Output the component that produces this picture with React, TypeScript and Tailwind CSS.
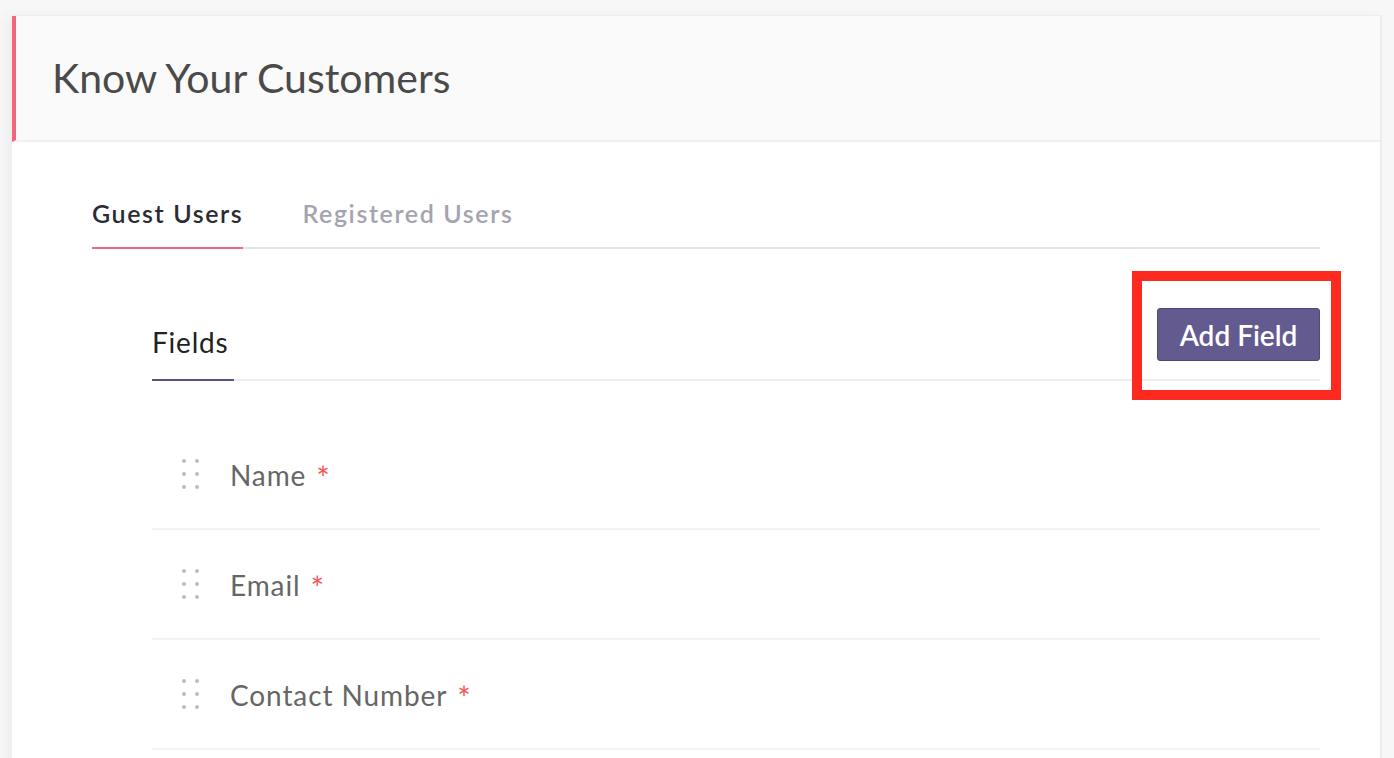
import React from "react";

function DragDots() {
  return (
    <div className="grid grid-cols-2 gap-x-[9px] gap-y-[9px] w-[17px]">
      {Array.from({ length: 6 }).map((_, i) => (
        <span key={i} className="block w-[4px] h-[4px] rounded-full bg-[#bdbdbd]" />
      ))}
    </div>
  );
}

function FieldRow({ label }: { label: string }) {
  return (
    <div className="h-[110px] border-b-2 border-[#f3f3f3] flex items-center pl-[30px]">
      <DragDots />
      <div className="ml-[31px] flex items-baseline text-[28px] leading-[34px] text-[#666666] tracking-[0.9px]">
        <span>{label}</span>
        <span className="ml-[10px] text-[#f25858] text-[32px] leading-[34px] relative top-[4px]">*</span>
      </div>
    </div>
  );
}

export default function App() {
  return (
    <div
      className="min-h-screen w-full bg-[#f7f7f7] pt-[15px] overflow-hidden"
      style={{ fontFamily: "Lato, 'Open Sans', sans-serif" }}
    >
      <div className="ml-[12px] w-[1370px] min-h-[760px] bg-white border-t border-[#ededed] border-r-2 border-r-[#ececec] shadow-[-6px_0_10px_rgba(0,0,0,0.035)]">
        <div className="h-[126px] bg-[#fafafa] border-l-4 border-[#f0667a] border-b-2 border-b-[#f0f0f0] flex items-center pl-[36px]">
          <h1 className="text-[41px] leading-[48px] text-[#4a4a4a] font-normal">
            Know Your Customers
          </h1>
        </div>

        <div className="pl-[80px] pr-[60px]">
          <div className="mt-[56px] flex gap-[59px] border-b-2 border-[#e3e3ea]">
            <div className="text-[25px] leading-[30px] font-semibold tracking-[1.6px] text-[#2b2b33] pb-[19px] border-b-2 border-[#f0667a] -mb-[2px]">
              Guest Users
            </div>
            <div className="text-[25px] leading-[30px] font-semibold tracking-[1.6px] text-[#a4a4ae] pb-[19px]">
              Registered Users
            </div>
          </div>

          <div className="pl-[60px]">
            <div className="relative mt-[59px] flex items-end justify-between border-b-2 border-[#eeeeee]">
              <div className="text-[28px] leading-[34px] tracking-[0.8px] text-[#222222] pb-[20px] border-b-2 border-[#5b5188] -mb-[2px] w-[82px]">
                Fields
              </div>
              <button className="mb-[18px] h-[53px] w-[163px] rounded-[3px] bg-[#635b8f] border border-[#4f4878] text-white text-[28px] font-semibold leading-none">
                Add Field
              </button>
              <div className="absolute -right-[21px] -top-[37px] w-[209px] h-[129px] border-[10px] border-[#ff2a1f] pointer-events-none" />
            </div>

            <div className="mt-[39px]">
              <FieldRow label="Name" />
              <FieldRow label="Email" />
              <FieldRow label="Contact Number" />
            </div>
          </div>
        </div>
      </div>
    </div>
  );
}
